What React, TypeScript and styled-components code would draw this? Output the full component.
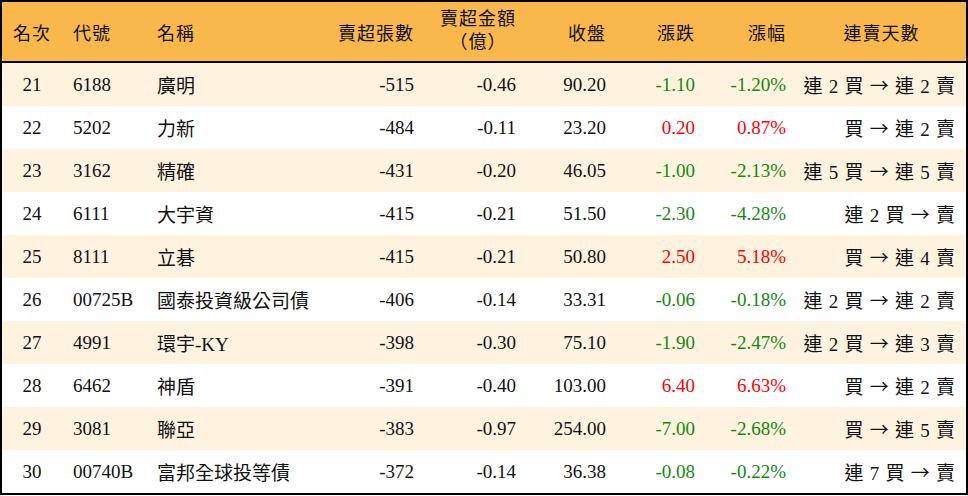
import React from "react";
import styled, { createGlobalStyle } from "styled-components";

const Global = createGlobalStyle`
  html, body { margin: 0; padding: 0; background: #ffffff; }
  body { font-family: "Liberation Serif", "Noto Sans CJK TC", serif; }
`;

const COLS = "60px 84px 184px 95px 102px 90px 89px 91px 169px";

const Table = styled.div`
  width: 968px;
  box-sizing: border-box;
  border: 2px solid #000;
  background: #fff;
  color: #111;
  font-family: "Liberation Serif", "Noto Sans CJK TC", serif;
  font-size: 19px;
`;

const HeaderRow = styled.div`
  display: grid;
  grid-template-columns: ${COLS};
  height: 59px;
  background: #f9b84b;
  border-bottom: 2px solid #000;
`;

const Row = styled.div<{ $striped: boolean }>`
  display: grid;
  grid-template-columns: ${COLS};
  height: 43px;
  background: ${(p) => (p.$striped ? "#fef3df" : "#ffffff")};
`;

type Align = "left" | "center" | "right";

const Cell = styled.div<{ $align: Align; $tone?: "up" | "down" | "plain" }>`
  display: flex;
  align-items: center;
  justify-content: ${(p) =>
    p.$align === "left" ? "flex-start" : p.$align === "right" ? "flex-end" : "center"};
  padding: 0 11px;
  white-space: nowrap;
  color: ${(p) => (p.$tone === "up" ? "#ff0000" : p.$tone === "down" ? "#128a12" : "#111")};
`;

const HeadCell = styled(Cell)`
  font-size: 18px;
  letter-spacing: 1px;
  color: #111;
`;

const TwoLine = styled.span`
  display: inline-block;
  text-align: center;
  line-height: 21px;
  margin-top: -2px;
`;

const Paren = styled.span`
  font-family: "Noto Sans CJK TC", sans-serif;
`;

const Streak = styled.span`
  word-spacing: 1.5px;
`;

const Arrow = styled.span`
  font-family: "Noto Sans CJK TC", sans-serif;
  font-size: 19px;
`;

type Item = {
  rank: number;
  code: string;
  name: string;
  vol: string;
  amt: string;
  close: string;
  chg: string;
  pct: string;
  from: string;
  to: string;
};

const data: Item[] = [
  { rank: 21, code: "6188", name: "廣明", vol: "-515", amt: "-0.46", close: "90.20", chg: "-1.10", pct: "-1.20%", from: "連 2 買", to: "連 2 賣" },
  { rank: 22, code: "5202", name: "力新", vol: "-484", amt: "-0.11", close: "23.20", chg: "0.20", pct: "0.87%", from: "買", to: "連 2 賣" },
  { rank: 23, code: "3162", name: "精確", vol: "-431", amt: "-0.20", close: "46.05", chg: "-1.00", pct: "-2.13%", from: "連 5 買", to: "連 5 賣" },
  { rank: 24, code: "6111", name: "大宇資", vol: "-415", amt: "-0.21", close: "51.50", chg: "-2.30", pct: "-4.28%", from: "連 2 買", to: "賣" },
  { rank: 25, code: "8111", name: "立碁", vol: "-415", amt: "-0.21", close: "50.80", chg: "2.50", pct: "5.18%", from: "買", to: "連 4 賣" },
  { rank: 26, code: "00725B", name: "國泰投資級公司債", vol: "-406", amt: "-0.14", close: "33.31", chg: "-0.06", pct: "-0.18%", from: "連 2 買", to: "連 2 賣" },
  { rank: 27, code: "4991", name: "環宇-KY", vol: "-398", amt: "-0.30", close: "75.10", chg: "-1.90", pct: "-2.47%", from: "連 2 買", to: "連 3 賣" },
  { rank: 28, code: "6462", name: "神盾", vol: "-391", amt: "-0.40", close: "103.00", chg: "6.40", pct: "6.63%", from: "買", to: "連 2 賣" },
  { rank: 29, code: "3081", name: "聯亞", vol: "-383", amt: "-0.97", close: "254.00", chg: "-7.00", pct: "-2.68%", from: "買", to: "連 5 賣" },
  { rank: 30, code: "00740B", name: "富邦全球投等債", vol: "-372", amt: "-0.14", close: "36.38", chg: "-0.08", pct: "-0.22%", from: "連 7 買", to: "賣" },
];

export default function App() {
  return (
    <>
      <Global />
      <Table>
        <HeaderRow>
          <HeadCell $align="center">名次</HeadCell>
          <HeadCell $align="left">代號</HeadCell>
          <HeadCell $align="left">名稱</HeadCell>
          <HeadCell $align="right">賣超張數</HeadCell>
          <HeadCell $align="right">
            <TwoLine>
              賣超金額
              <br />
              <Paren>（億）</Paren>
            </TwoLine>
          </HeadCell>
          <HeadCell $align="right">收盤</HeadCell>
          <HeadCell $align="right">漲跌</HeadCell>
          <HeadCell $align="right">漲幅</HeadCell>
          <HeadCell $align="center">連賣天數</HeadCell>
        </HeaderRow>
        {data.map((d, i) => {
          const tone = d.chg.startsWith("-") ? "down" : "up";
          return (
            <Row key={d.rank} $striped={i % 2 === 0}>
              <Cell $align="center">{d.rank}</Cell>
              <Cell $align="left">{d.code}</Cell>
              <Cell $align="left">{d.name}</Cell>
              <Cell $align="right">{d.vol}</Cell>
              <Cell $align="right">{d.amt}</Cell>
              <Cell $align="right">{d.close}</Cell>
              <Cell $align="right" $tone={tone}>{d.chg}</Cell>
              <Cell $align="right" $tone={tone}>{d.pct}</Cell>
              <Cell $align="right">
                <Streak>
                  {d.from} <Arrow>→</Arrow> {d.to}
                </Streak>
              </Cell>
            </Row>
          );
        })}
      </Table>
    </>
  );
}
